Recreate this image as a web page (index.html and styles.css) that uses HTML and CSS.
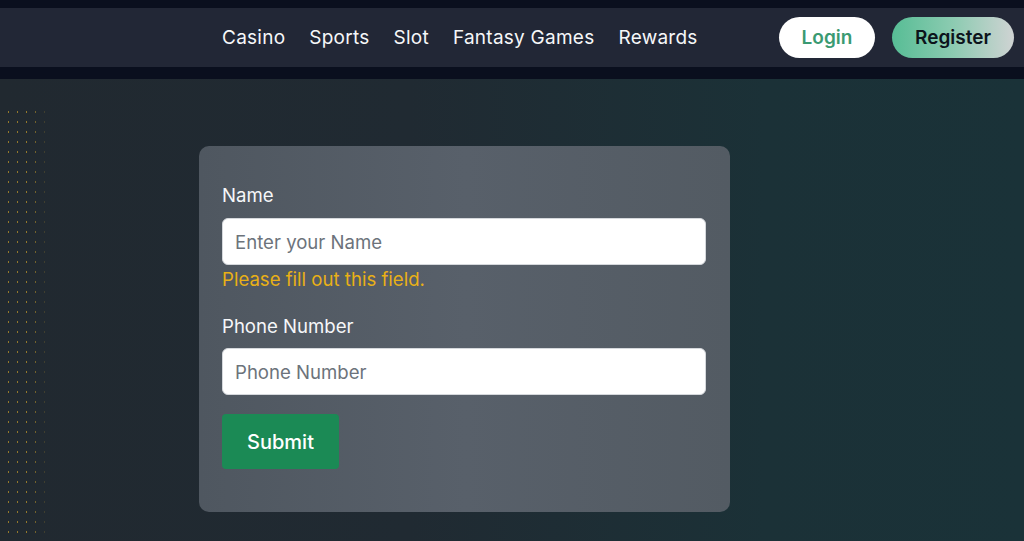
FILE: index.html
```html
<!DOCTYPE html>
<html lang="en">
<head>
    <meta charset="UTF-8">
    <meta name="viewport" content="width=device-width, initial-scale=1.0">
    <title>Register</title>
    <link rel="stylesheet" href="styles.css">
</head>
<body>
    <header class="topbar">
        <nav class="nav">
            <div class="nav-links">
                <a href="#">Casino</a>
                <a href="#">Sports</a>
                <a href="#">Slot</a>
                <a href="#">Fantasy Games</a>
                <a href="#">Rewards</a>
            </div>
            <div class="nav-actions">
                <button class="btn-login">Login</button>
                <button class="btn-register">Register</button>
            </div>
        </nav>
    </header>

    <main class="page">
        <div class="dots"></div>
        <form class="card">
            <label class="field-label" for="name">Name</label>
            <input class="field-input" id="name" type="text" placeholder="Enter your Name">
            <div class="field-error">Please fill out this field.</div>

            <label class="field-label second" for="phone">Phone Number</label>
            <input class="field-input" id="phone" type="tel" placeholder="Phone Number">

            <button class="btn-submit" type="button">Submit</button>
        </form>
    </main>
</body>
</html>
```

FILE: styles.css
```css
:root {
    --bar-dark: #0a0f1e;
    --nav-bg: #222736;
    --text-light: #f6f7f9;
    --green: #1b8a55;
    --warn: #e9b016;
}

* {
    margin: 0;
    padding: 0;
    box-sizing: border-box;
    font-family: 'Inter', 'Noto Sans', sans-serif;
}

html, body {
    height: 100%;
}

body {
    background: var(--bar-dark);
    color: var(--text-light);
    overflow: hidden;
}

.topbar {
    padding: 8px 0 12px;
    background: var(--bar-dark);
}

.nav {
    height: 59px;
    background: var(--nav-bg);
    display: flex;
    align-items: center;
    padding: 0 10px 0 222px;
}

.nav-links {
    display: flex;
    gap: 24px;
}

.nav-links a {
    color: var(--text-light);
    text-decoration: none;
    font-size: 19px;
    letter-spacing: 0.25px;
}

.nav-actions {
    margin-left: auto;
    display: flex;
    gap: 17px;
}

.nav-actions button {
    height: 41px;
    border: none;
    border-radius: 21px;
    font-size: 19px;
    font-weight: 600;
    cursor: pointer;
}

.btn-login {
    width: 96px;
    background: #ffffff;
    color: #3a9a72;
}

.btn-register {
    width: 122px;
    background: linear-gradient(90deg, #57bd95 0%, #8ccbb1 50%, #cfd3d3 100%);
    color: #0c141b;
}

.page {
    position: relative;
    height: calc(100% - 79px);
    background: linear-gradient(90deg, #212930 0%, #202a32 40%, #1b3137 75%, #1a3238 100%);
    padding: 67px 0 0 199px;
}

.dots {
    position: absolute;
    left: 4px;
    top: 28px;
    width: 46px;
    height: 440px;
    background-image: radial-gradient(circle, rgba(226, 176, 40, 0.6) 0.6px, transparent 1.1px);
    background-size: 9px 10px;
    -webkit-mask-image: linear-gradient(90deg, #000 0%, #000 55%, transparent 100%);
}

.card {
    width: 531px;
    height: 366px;
    border-radius: 10px;
    background: linear-gradient(90deg, #4f5760 0%, #58606a 50%, #535b63 100%);
    padding: 38px 24px 0 23px;
    display: flex;
    flex-direction: column;
}

.field-label {
    font-size: 18.6px;
    line-height: 22px;
    color: var(--text-light);
    margin-bottom: 12px;
}

.field-label.second {
    margin-top: 25px;
    margin-bottom: 11px;
}

.field-input {
    height: 47px;
    width: 100%;
    border: 1px solid #d5d8dc;
    border-radius: 6px;
    background: #ffffff;
    padding: 0 12px;
    font-size: 18.6px;
    color: #212529;
}

.field-input::placeholder {
    color: #6c737b;
}

.field-error {
    margin-top: 3px;
    font-size: 18.6px;
    line-height: 22px;
    color: var(--warn);
}

.btn-submit {
    margin-top: 19px;
    width: 117px;
    height: 55px;
    border: none;
    border-radius: 4px;
    background: var(--green);
    color: #ffffff;
    font-size: 20px;
    font-weight: 500;
    cursor: pointer;
}
```
